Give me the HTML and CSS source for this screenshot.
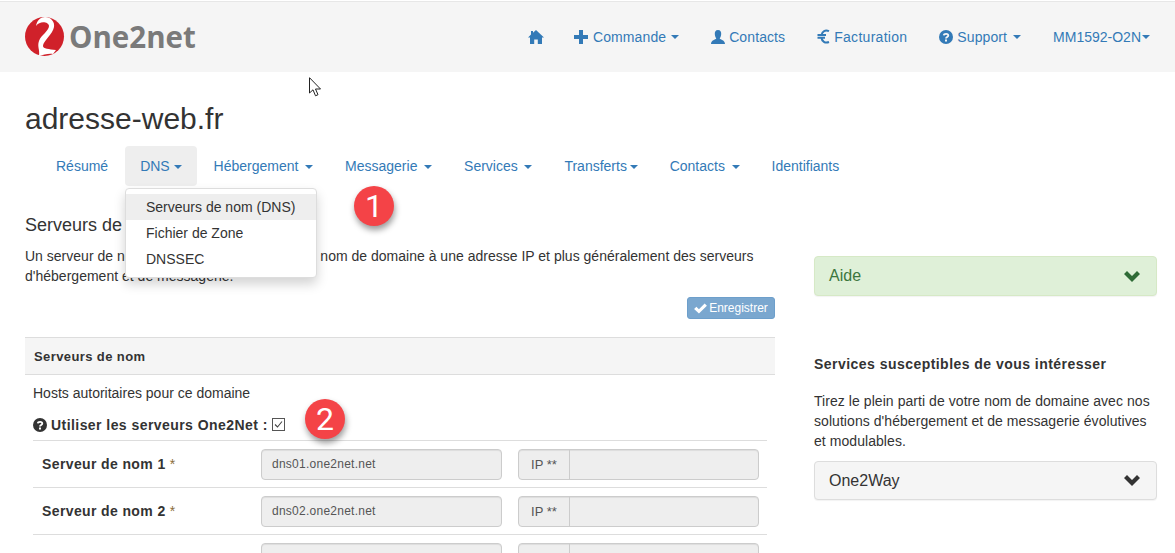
FILE: index.html
```html
<!DOCTYPE html>
<html lang="fr">
<head>
<meta charset="utf-8">
<title>adresse-web.fr</title>
<link rel="stylesheet" href="styles.css">
</head>
<body>
<header class="topbar">
  <a class="logo" href="#">
    <svg class="logo-mark" viewBox="0 0 40 40" width="40" height="40"><circle cx="19.500" cy="19.500" r="19.500" fill="#d0212a"/><path d="M11 9C12 3 16 0 20 0 26 0 30 5 29 10 28 17 18 24 18 29 18 32 24 32 31 33L28 37C24 36 18 38 14 39 15 32 12 30 14 24 16 18 24 14 24 9 24 5 15 3 11 9Z" fill="#fff"/></svg>
    <span class="logo-text">One2net</span>
  </a>
  <nav class="mainnav">
    <a href="#" class="home"><svg class="ico" viewBox="0 0 16 14" width="16" height="14"><path d="M8 0 16 7.500H14V14H9.800V9.500H6.200V14H2V7.500H0L3 4.600V1H5V2.700Z" fill="#337ab7"/></svg></a>
    <a href="#" class="order"><svg class="ico" viewBox="0 0 14 14" width="14" height="14"><path d="M5 0H9V5H14V9H9V14H5V9H0V5H5Z" fill="#337ab7"/></svg><span>Commande</span><i class="caret"></i></a>
    <a href="#"><svg class="ico" viewBox="0 0 14 14" width="14" height="14"><path d="M7 0C9.500 0 10.300 2 10.200 4 10.100 6 9.300 7.500 8.700 8.500 9.500 9.800 14 10 14 14H0C0 10 4.500 9.800 5.300 8.500 4.700 7.500 3.900 6 3.800 4 3.700 2 4.500 0 7 0Z" fill="#337ab7"/></svg><span>Contacts</span></a>
    <a href="#" class="billing"><svg class="ico" viewBox="0 0 13 15" width="13" height="15"><path d="M12 2.200C8.500 .5 5 2 4.300 6.500M12 13C8 14.500 5 12.500 4.300 8.500M.5 6H9M.5 8.800H8" fill="none" stroke="#337ab7" stroke-width="2"/></svg><span>Facturation</span></a>
    <a href="#"><svg class="ico" viewBox="0 0 14 14" width="14" height="14"><circle cx="7" cy="7" r="7" fill="#337ab7"/><path d="M4.800 5.300C5 3.500 9.300 3.300 9.300 5.500 9.300 7 7 6.900 7 8.400" fill="none" stroke="#f5f5f5" stroke-width="1.800"/><rect x="6" y="9.500" width="2" height="2" fill="#f5f5f5"/></svg><span>Support</span><i class="caret"></i></a>
    <a href="#" class="account"><span>MM1592-O2N</span><i class="caret"></i></a>
  </nav>
</header>

<main class="page">
  <h1 class="title">adresse-web.fr</h1>
  <nav class="tabs">
    <a href="#">Résumé</a>
    <a href="#" class="active">DNS <i class="caret"></i></a>
    <a href="#">Hébergement <i class="caret"></i></a>
    <a href="#">Messagerie <i class="caret"></i></a>
    <a href="#">Services <i class="caret"></i></a>
    <a href="#">Transferts<i class="caret"></i></a>
    <a href="#">Contacts <i class="caret"></i></a>
    <a href="#">Identifiants</a>
  </nav>

  <div class="columns">
    <section class="left">
      <h3 class="section-title">Serveurs de nom (DNS)</h3>
      <p class="intro">Un serveur de nom (DNS) permet de diriger un nom de domaine à une adresse IP et plus généralement des serveurs d'hébergement et de messagerie.</p>
      <div class="actions">
        <button class="btn-save" type="button"><svg viewBox="0 0 14 12" width="13" height="11"><path d="M0 6.500 2.500 4 5.300 6.800 11.500 .5 14 3 5.300 11.500Z" fill="#fff"/></svg> Enregistrer</button>
      </div>
      <div class="panel">
        <div class="panel-head">Serveurs de nom</div>
        <div class="panel-body">
          <p class="hosts">Hosts autoritaires pour ce domaine</p>
          <div class="use-own">
            <svg viewBox="0 0 14 14" width="14" height="14"><circle cx="7" cy="7" r="7" fill="#333"/><path d="M4.800 5.300C5 3.500 9.300 3.300 9.300 5.500 9.300 7 7 6.900 7 8.400" fill="none" stroke="#fff" stroke-width="1.800"/><rect x="6" y="9.500" width="2" height="2" fill="#fff"/></svg>
            <strong>Utiliser les serveurs One2Net :</strong>
            <svg class="check" viewBox="0 0 13 13" width="13" height="13"><rect x=".5" y=".5" width="12" height="12" fill="#fff" stroke="#555"/><path d="M3 6.500 5.500 9 10 3.500" fill="none" stroke="#444" stroke-width="1.100"/></svg>
          </div>
          <div class="row">
            <label>Serveur de nom 1 <span class="req">*</span></label>
            <div class="field">dns01.one2net.net</div>
            <div class="group"><span class="addon">IP **</span><span class="addon-input"></span></div>
          </div>
          <div class="row">
            <label>Serveur de nom 2 <span class="req">*</span></label>
            <div class="field">dns02.one2net.net</div>
            <div class="group"><span class="addon">IP **</span><span class="addon-input"></span></div>
          </div>
          <div class="row">
            <label></label>
            <div class="field"></div>
            <div class="group"><span class="addon"></span><span class="addon-input"></span></div>
          </div>
        </div>
      </div>
    </section>

    <aside class="right">
      <div class="acc acc-green">Aide <svg viewBox="0 0 16 11" width="16" height="11"><path d="M0 3 3 0 8 5 13 0 16 3 8 11Z" fill="#2f6b36"/></svg></div>
      <h4 class="aside-title">Services susceptibles de vous intéresser</h4>
      <p class="aside-text">Tirez le plein parti de votre nom de domaine avec nos solutions d'hébergement et de messagerie évolutives et modulables.</p>
      <div class="acc acc-gray">One2Way <svg viewBox="0 0 16 11" width="16" height="11"><path d="M0 3 3 0 8 5 13 0 16 3 8 11Z" fill="#333"/></svg></div>
    </aside>
  </div>
</main>

<ul class="dropdown">
  <li class="hover">Serveurs de nom (DNS)</li>
  <li>Fichier de Zone</li>
  <li>DNSSEC</li>
</ul>
<div class="badge badge-one">1</div>
<div class="badge badge-two">2</div>
<svg class="cursor" viewBox="0 0 13 20" width="13" height="20"><path d="M.5 .7V16L4 12.800 6.500 18.800 9 17.700 6.500 12H11.500Z" fill="#fff" stroke="#222"/></svg>
</body>
</html>
```

FILE: styles.css
```css
* { box-sizing: border-box; }
html, body { margin: 0; padding: 0; height: 553px; overflow: hidden; }
body { background: #fff; color: #333; font: 14px/20px "Liberation Sans", Arial, sans-serif; position: relative; }
a { color: #337ab7; text-decoration: none; }

.topbar { margin-top: 1px; height: 71px; border-top: 1px solid #e7e7e7; background: #f5f5f5; display: flex; justify-content: space-between; align-items: center; padding: 0 10px 1px 25px; }
.logo { display: flex; align-items: center; gap: 4px; }
.logo-mark { display: block; }
.logo-text { font: 700 29.5px/40px "Open Sans", sans-serif; color: #7a7a7a; }
.mainnav { display: flex; gap: 2px; letter-spacing: .1px; }
.mainnav a { padding: 0 15px; display: flex; align-items: center; gap: 4px; height: 40px; }
.mainnav .home { padding-right: 13px; }
.mainnav .order { gap: 5px; }
.mainnav .billing { letter-spacing: .28px; }
.mainnav .caret { margin-left: 2px; }
.mainnav .order .caret { margin-left: 0; }
.mainnav .account { gap: 1px; letter-spacing: 0; }
.mainnav .account .caret { margin-left: 0; }
.caret { display: inline-block; width: 0; height: 0; border-top: 4px solid; border-left: 4px solid transparent; border-right: 4px solid transparent; vertical-align: middle; }

.page { padding: 0 25px; height: 481px; overflow: hidden; }
.title { font-size: 30px; line-height: 33px; font-weight: 400; margin: 30px 0 0; }
.tabs { display: flex; gap: 2px; margin: 11px 0 0 16px; }
.tabs a { padding: 10px 15px; border-radius: 4px; height: 40px; white-space: pre; }
.tabs a .caret { margin-left: 2.75px; }
.tabs a.active .caret { margin-left: 0; }
.tabs a.active { background: #eee; }

.columns { display: grid; grid-template-columns: 750px 343px; column-gap: 39px; }
.section-title { font-size: 18px; line-height: 20px; font-weight: 400; margin: 29px 0 0; }
.intro { margin: 11px 0 0; letter-spacing: .01px; }
.actions { display: flex; justify-content: flex-end; margin-top: 11px; }
.btn-save { height: 22px; width: 88px; padding: 0; border: 1px solid #6d9fcb; border-radius: 3px; background: #7aa7cf; color: #fff; font: 12px/18px "Liberation Sans", Arial, sans-serif; display: flex; align-items: center; justify-content: center; gap: 2px; }

.panel { margin-top: 18px; }
.panel-head { height: 38px; background: #f5f5f5; border-top: 1px solid #ddd; border-bottom: 1px solid #ddd; padding: 0 9px; font-weight: 700; font-size: 13px; line-height: 38px; letter-spacing: .4px; }
.panel-body { padding: 8px 8px 0; }
.hosts { margin: 0; }
.use-own { display: flex; align-items: center; height: 20px; margin-top: 12px; gap: 4px; letter-spacing: .44px; }
.use-own .check { margin: -2px 0 0 0; }
.row { display: grid; grid-template-columns: 212px 241px 241px; column-gap: 16px; align-items: center; height: 47px; border-top: 1px solid #ddd; }
.use-own + .row { margin-top: 5px; }
.row label { padding-left: 9px; font-weight: 700; letter-spacing: .38px; }
.req { font-weight: 400; color: #8a6d3b; }
.field, .group { height: 31px; background: #eee; border: 1px solid #ccc; border-radius: 4px; box-shadow: inset 0 1px 1px rgba(0,0,0,.075); }
.field { padding: 0 10px; font-size: 12px; line-height: 29px; letter-spacing: .25px; color: #555; }
.group { display: flex; }
.addon { width: 51px; border-right: 1px solid #ccc; text-align: center; font-size: 13px; line-height: 29px; color: #555; }
.addon-input { flex: 1; }

.right { padding-top: 70px; }
.acc { display: flex; justify-content: space-between; align-items: center; font-size: 16px; padding: 0 16px 0 14px; border-radius: 4px; box-shadow: 0 1px 1px rgba(0,0,0,.05); }
.acc-green { height: 40px; background: #dff0d8; border: 1px solid #d6e9c6; color: #3c763d; }
.acc-gray { height: 39px; background: #f5f5f5; border: 1px solid #ddd; color: #333; }
.aside-title { font-size: 14px; line-height: 20px; font-weight: 700; letter-spacing: .46px; margin: 58px 0 0; }
.aside-text { margin: 17px 0 10px; letter-spacing: .06px; }

.dropdown { position: absolute; left: 125px; top: 188px; width: 192px; height: 90px; margin: 0; padding: 5px 0 0; list-style: none; background: #fff; border: 1px solid #ddd; border-radius: 4px; box-shadow: 0 6px 12px rgba(0,0,0,.175); }
.dropdown li { height: 26px; line-height: 26px; padding: 0 20px; }
.dropdown li.hover { background: #eee; }
.badge { position: absolute; width: 40px; height: 40px; border-radius: 50%; background: #f44347; color: #fff; font: 32px/40px Roboto, sans-serif; text-align: center; box-shadow: 1px 4px 6px rgba(0,0,0,.4); }
.badge-one { left: 354px; top: 186px; }
.badge-two { left: 305px; top: 399px; }
.cursor { position: absolute; left: 309px; top: 77px; }
```
